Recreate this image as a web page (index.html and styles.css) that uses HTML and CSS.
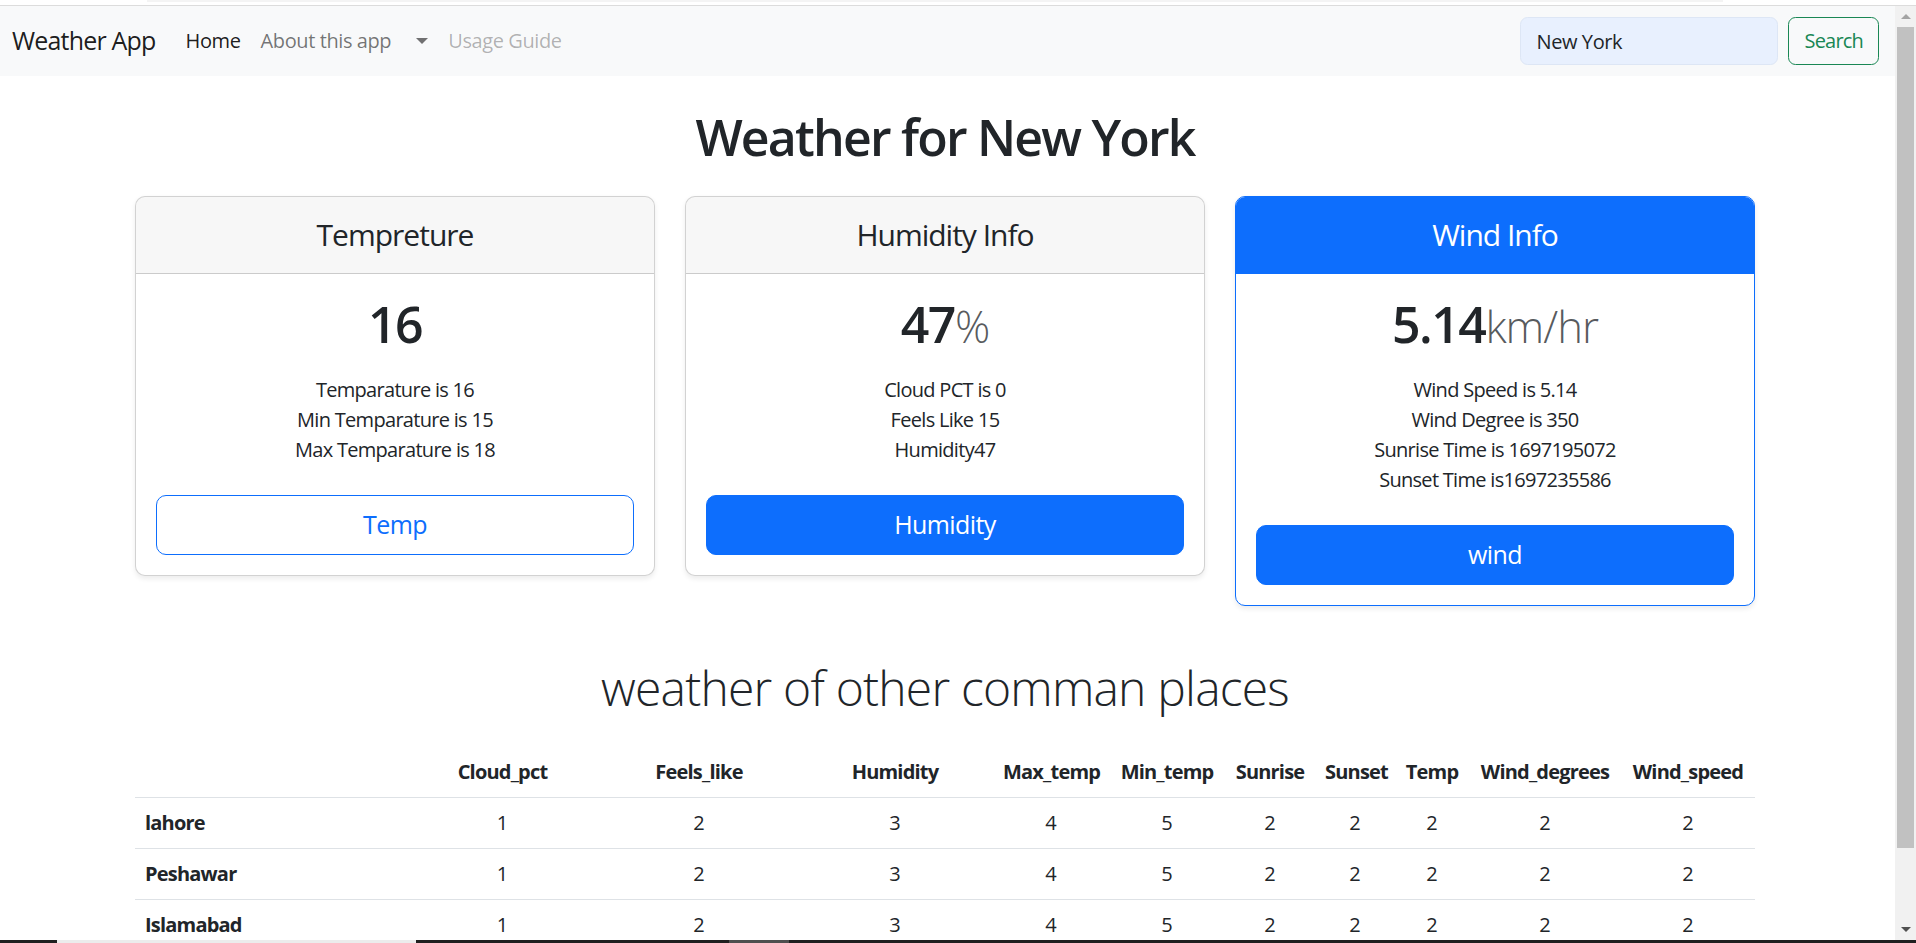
FILE: index.html
```html
<!DOCTYPE html>
<html lang="en">
<head>
<meta charset="utf-8">
<title>Weather App</title>
<link rel="stylesheet" href="styles.css">
</head>
<body>
<div class="screen">
  <div class="topstrip"><div class="tabline"></div></div>
  <div class="viewport">
    <div class="page">
      <nav class="navbar">
        <div class="nav-left">
          <span class="brand">Weather App</span>
          <ul class="nav">
            <li class="nav-link active">Home</li>
            <li class="nav-link">About this app</li>
            <li class="nav-link toggle"><span class="caret"></span></li>
            <li class="nav-link disabled">Usage Guide</li>
          </ul>
        </div>
        <form class="search">
          <input class="search-input" type="text" value="New York">
          <button type="button" class="btn-search">Search</button>
        </form>
      </nav>

      <main class="container">
        <h1 class="page-title">Weather for New York</h1>

        <div class="cards">
          <div class="card">
            <div class="card-header"><h4>Tempreture</h4></div>
            <div class="card-body">
              <h1 class="value">16</h1>
              <ul class="facts">
                <li>Temparature is 16</li>
                <li>Min Temparature is 15</li>
                <li>Max Temparature is 18</li>
              </ul>
              <button type="button" class="btn btn-outline">Temp</button>
            </div>
          </div>

          <div class="card">
            <div class="card-header"><h4>Humidity Info</h4></div>
            <div class="card-body">
              <h1 class="value">47<small class="unit">%</small></h1>
              <ul class="facts">
                <li>Cloud PCT is 0</li>
                <li>Feels Like 15</li>
                <li>Humidity47</li>
              </ul>
              <button type="button" class="btn btn-primary">Humidity</button>
            </div>
          </div>

          <div class="card card-primary">
            <div class="card-header"><h4>Wind Info</h4></div>
            <div class="card-body">
              <h1 class="value">5.14<small class="unit">km/hr</small></h1>
              <ul class="facts">
                <li>Wind Speed is 5.14</li>
                <li>Wind Degree is 350</li>
                <li>Sunrise Time is 1697195072</li>
                <li>Sunset Time is1697235586</li>
              </ul>
              <button type="button" class="btn btn-primary">wind</button>
            </div>
          </div>
        </div>

        <h2 class="section-title">weather of other comman places</h2>

        <table class="table">
          <colgroup>
            <col class="c-name"><col class="c-cloud"><col class="c-feels"><col class="c-hum">
            <col class="c-max"><col class="c-min"><col class="c-sunrise"><col class="c-sunset">
            <col class="c-temp"><col class="c-wdeg"><col class="c-wspd">
          </colgroup>
          <thead>
            <tr>
              <th></th><th>Cloud_pct</th><th>Feels_like</th><th>Humidity</th><th>Max_temp</th><th>Min_temp</th><th>Sunrise</th><th>Sunset</th><th>Temp</th><th>Wind_degrees</th><th>Wind_speed</th>
            </tr>
          </thead>
          <tbody>
            <tr><th>lahore</th><td>1</td><td>2</td><td>3</td><td>4</td><td>5</td><td>2</td><td>2</td><td>2</td><td>2</td><td>2</td></tr>
            <tr><th>Peshawar</th><td>1</td><td>2</td><td>3</td><td>4</td><td>5</td><td>2</td><td>2</td><td>2</td><td>2</td><td>2</td></tr>
            <tr><th>Islamabad</th><td>1</td><td>2</td><td>3</td><td>4</td><td>5</td><td>2</td><td>2</td><td>2</td><td>2</td><td>2</td></tr>
          </tbody>
        </table>
      </main>
    </div>

    <div class="scrollbar">
      <div class="sb-btn"><span class="arrow-up"></span></div>
      <div class="sb-thumb"></div>
      <div class="sb-space"></div>
      <div class="sb-btn"><span class="arrow-down"></span></div>
    </div>
  </div>
  <div class="taskbar"><span class="tb-light"></span><span class="tb-gray"></span></div>
</div>
</body>
</html>
```

FILE: styles.css
```css
* { box-sizing: border-box; }

html, body {
  margin: 0;
  padding: 0;
  background: #ffffff;
}

body {
  font-family: "Open Sans", "Noto Sans", sans-serif;
  font-size: 20px;
  line-height: 1.5;
  color: #212529;
}

.screen {
  width: 1916px;
  height: 943px;
  display: flex;
  flex-direction: column;
  overflow: hidden;
}

.topstrip {
  height: 6px;
  flex: none;
  background: #ffffff;
  border-bottom: 1px solid #dcdcdc;
}

.tabline {
  margin-left: 147px;
  width: 1576px;
  height: 2px;
  background: #f4f4f4;
}

.viewport {
  flex: 1;
  display: flex;
  min-height: 0;
}

.page {
  flex: 1;
  min-width: 0;
  overflow: hidden;
}

/* ---------- navbar ---------- */
.navbar {
  height: 70px;
  background: #f8f9fa;
  display: flex;
  align-items: center;
  justify-content: space-between;
  padding: 0 16px 0 12px;
}

.nav-left {
  display: flex;
  align-items: center;
}

.brand {
  font-size: 25px;
  line-height: 37.5px;
  letter-spacing: -0.8px;
  color: rgba(0, 0, 0, 0.9);
  margin-right: 20px;
}

.nav {
  list-style: none;
  margin: 0;
  padding: 0;
  display: flex;
  align-items: center;
}

.nav-link {
  padding: 10px 10px;
  line-height: 30px;
  letter-spacing: -0.4px;
  color: rgba(0, 0, 0, 0.55);
}

.nav-link.active { color: rgba(0, 0, 0, 0.9); }
.nav-link.disabled { color: rgba(0, 0, 0, 0.3); }

.nav-link.toggle {
  display: flex;
  align-items: center;
  height: 50px;
}

.caret {
  display: block;
  margin-left: 5px;
  width: 0;
  height: 0;
  border-top: 6px solid rgba(0, 0, 0, 0.55);
  border-left: 6px solid transparent;
  border-right: 6px solid transparent;
}

.search {
  display: flex;
  align-items: center;
  margin: 0;
}

.search-input {
  width: 258px;
  height: 47.5px;
  padding: 7.5px 15px;
  font-family: inherit;
  font-size: 20px;
  letter-spacing: -0.4px;
  color: #212529;
  background: #e8f0fe;
  border: 1px solid #dde6f5;
  border-radius: 7.5px;
  outline: none;
}

.btn-search {
  margin-left: 10px;
  height: 47.5px;
  padding: 7.5px 15px;
  font-family: inherit;
  font-size: 20px;
  line-height: 30px;
  letter-spacing: -0.8px;
  color: #198754;
  background: transparent;
  border: 1px solid #198754;
  border-radius: 7.5px;
}

/* ---------- main ---------- */
.container {
  width: 1650px;
  margin: 0 0 0 120px;
  padding: 0 15px;
}

.page-title {
  margin: 31px 0 29px;
  font-size: 50px;
  font-weight: 600;
  line-height: 60px;
  letter-spacing: -1.8px;
  text-align: center;
}

.cards {
  display: grid;
  grid-template-columns: repeat(3, 1fr);
  gap: 30px;
  align-items: start;
}

.card {
  border: 1px solid rgba(0, 0, 0, 0.175);
  border-radius: 10px;
  box-shadow: 0 2.5px 5px rgba(0, 0, 0, 0.075);
  overflow: hidden;
  background: #ffffff;
}

.card-header {
  padding: 20px;
  background: rgba(0, 0, 0, 0.03);
  border-bottom: 1px solid rgba(0, 0, 0, 0.175);
  text-align: center;
}

.card-header h4 {
  margin: 0;
  font-size: 30px;
  font-weight: 400;
  line-height: 36px;
  letter-spacing: -1px;
}

.card-primary {
  border-color: #0d6efd;
}

.card-primary .card-header {
  background: #0d6efd;
  border-bottom-color: #0d6efd;
  color: #ffffff;
}

.card-body {
  padding: 20px;
  text-align: center;
}

.value {
  margin: 0 0 10px;
  font-size: 50px;
  font-weight: 600;
  line-height: 60px;
  letter-spacing: -1.5px;
}

.unit {
  font-size: 0.875em;
  font-weight: 300;
  line-height: 1;
  letter-spacing: -1px;
  color: rgba(33, 37, 41, 0.75);
}

.facts {
  list-style: none;
  margin: 21px 0 30px;
  padding: 0;
  line-height: 30px;
  letter-spacing: -0.7px;
}

.btn {
  display: block;
  width: 100%;
  padding: 10px 20px;
  font-family: inherit;
  font-size: 25px;
  line-height: 37.5px;
  letter-spacing: -0.6px;
  border: 1px solid #0d6efd;
  border-radius: 10px;
}

.btn-outline {
  background: transparent;
  color: #0d6efd;
}

.btn-primary {
  background: #0d6efd;
  color: #ffffff;
}

.section-title {
  margin: 52px 0 29px;
  font-size: 48px;
  font-weight: 300;
  line-height: 60px;
  letter-spacing: -0.8px;
  text-align: center;
}

/* ---------- table ---------- */
.table {
  width: 100%;
  border-collapse: collapse;
  table-layout: fixed;
}

.c-name { width: 269px; }
.c-cloud { width: 197px; }
.c-feels { width: 196px; }
.c-hum { width: 196px; }
.c-max { width: 116px; }
.c-min { width: 116px; }
.c-sunrise { width: 90px; }
.c-sunset { width: 80px; }
.c-temp { width: 74px; }
.c-wdeg { width: 152px; }
.c-wspd { width: 134px; }

.table th,
.table td {
  padding: 10px;
  line-height: 30px;
  border-bottom: 1px solid #dee2e6;
  text-align: center;
  white-space: nowrap;
}

.table th {
  font-weight: 700;
  letter-spacing: -0.8px;
}

.table tbody th {
  text-align: left;
}

/* ---------- scrollbar ---------- */
.scrollbar {
  width: 21px;
  flex: none;
  background: #f1f1f1;
  display: flex;
  flex-direction: column;
}

.sb-btn {
  height: 21px;
  flex: none;
  display: flex;
  align-items: center;
  justify-content: center;
}

.arrow-up {
  width: 0;
  height: 0;
  border-bottom: 5px solid #a3a3a3;
  border-left: 5px solid transparent;
  border-right: 5px solid transparent;
}

.arrow-down {
  width: 0;
  height: 0;
  border-top: 5px solid #505050;
  border-left: 5px solid transparent;
  border-right: 5px solid transparent;
}

.sb-thumb {
  height: 821px;
  flex: none;
  margin: 0 2px;
  background: #c1c1c1;
}

.sb-space { flex: 1; }

/* ---------- taskbar edge ---------- */
.taskbar {
  height: 3px;
  flex: none;
  background: #1f1f1f;
  display: flex;
}

.tb-light {
  margin-left: 57px;
  width: 359px;
  background: #ececec;
}

.tb-gray {
  margin-left: 313px;
  width: 60px;
  background: #4f4f4f;
}
```
